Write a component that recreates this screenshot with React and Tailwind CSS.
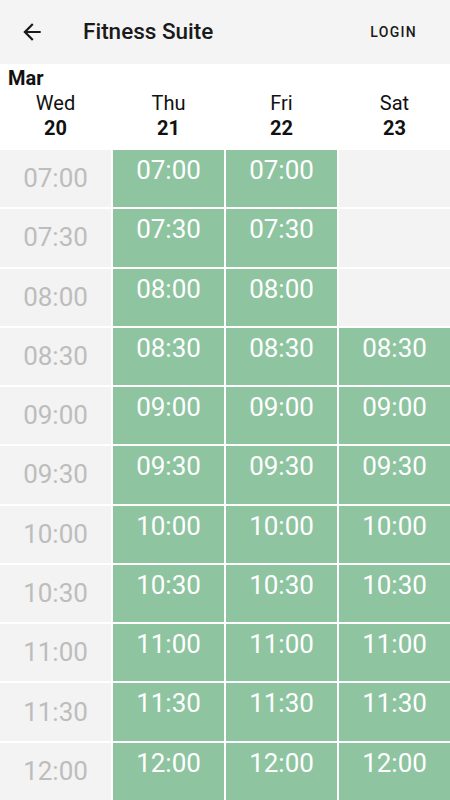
import React from 'react'

const times = ['07:00', '07:30', '08:00', '08:30', '09:00', '09:30', '10:00', '10:30', '11:00', '11:30', '12:00']

const days = [
  { name: 'Wed', date: '20' },
  { name: 'Thu', date: '21' },
  { name: 'Fri', date: '22' },
  { name: 'Sat', date: '23' },
]

// which slots are bookable per column (Wed is past, Sat opens 08:30)
const isOpen = (col, time) => {
  if (col === 0) return false
  if (col === 3) return time >= '08:30'
  return true
}

function BackArrow() {
  return (
    <svg width="26" height="26" viewBox="0 0 24 24" fill="#1a1a1a">
      <path d="M20 11H7.83l5.59-5.59L12 4l-8 8 8 8 1.41-1.41L7.83 13H20v-2z" />
    </svg>
  )
}

export default function App() {
  return (
    <div className="w-[450px] h-[800px] flex flex-col overflow-hidden bg-white font-['Roboto',sans-serif] text-[#111]">
      {/* Toolbar */}
      <div className="h-16 shrink-0 flex items-center bg-[#f4f4f4]">
        <div className="ml-[19px] flex items-center">
          <BackArrow />
        </div>
        <h1 className="ml-[38px] text-[22.5px] font-medium text-[#1a1a1a]">Fitness Suite</h1>
        <button className="ml-auto mr-[33px] text-[14px] font-medium tracking-[1.3px] text-[#1a1a1a]">LOGIN</button>
      </div>

      {/* Date header */}
      <div className="shrink-0 h-[86px] pt-[2px] bg-white">
        <div className="pl-2 text-[20px] font-bold leading-[25px]">Mar</div>
        <div className="grid grid-cols-4 gap-[2px]">
          {days.map((d) => (
            <div key={d.name} className="flex flex-col items-center">
              <span className="text-[20px] leading-[25px]">{d.name}</span>
              <span className="text-[20px] leading-[25px] font-bold">{d.date}</span>
            </div>
          ))}
        </div>
      </div>

      {/* Slots */}
      <div className="flex-1 min-h-0 grid grid-cols-4 grid-rows-[repeat(11,minmax(0,1fr))] gap-[2px] bg-white">
        {times.map((t) =>
          days.map((d, col) => {
            if (col === 0) {
              return (
                <div key={t + col} className="bg-[#f3f3f3] flex items-center justify-center text-[26px] text-[#bdbdbd]">
                  {t}
                </div>
              )
            }
            if (!isOpen(col, t)) {
              return <div key={t + col} className="bg-[#f3f3f3]" />
            }
            return (
              <div key={t + col} className="bg-[#8ec4a0] flex justify-center pt-1 text-[26px] leading-[32px] text-white">
                {t}
              </div>
            )
          })
        )}
      </div>
    </div>
  )
}
